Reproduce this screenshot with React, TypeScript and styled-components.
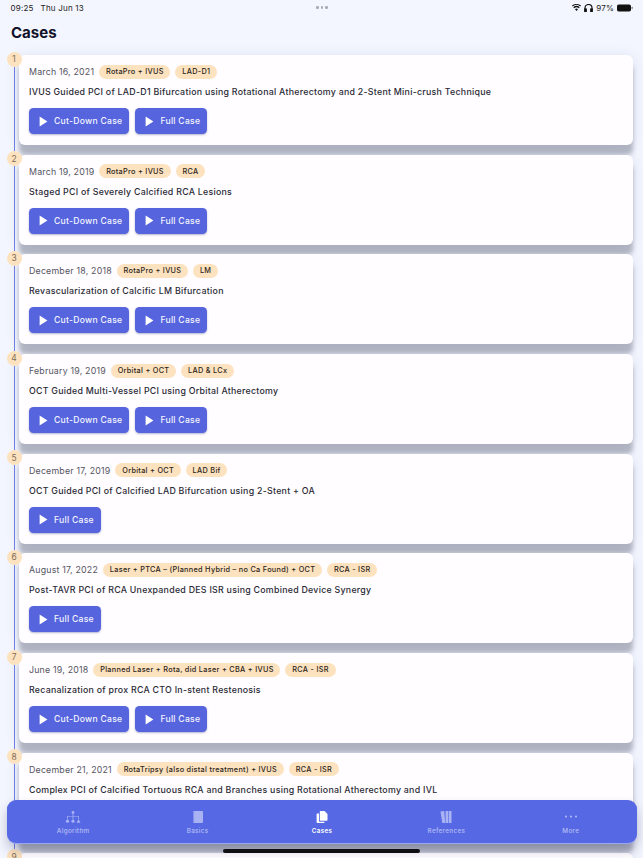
import React from "react";
import styled, { createGlobalStyle } from "styled-components";

const Global = createGlobalStyle`
  html, body { margin: 0; padding: 0; height: 858px; overflow: hidden; background: #f3f6fe; }
  * { box-sizing: border-box; }
`;

const Page = styled.div`
  position: relative;
  width: 643px;
  height: 858px;
  overflow: hidden;
  background: #f3f6fe;
  font-family: Inter, "Noto Sans", sans-serif;
  color: #16162a;
`;
const StatusBar = styled.div`
  height: 15px;
  padding: 0 10px 0 10.5px;
  display: grid;
  grid-template-columns: 1fr auto 1fr;
  align-items: center;
  font-size: 8px;
  letter-spacing: 0.2px;
  color: #222;
`;
const StatusLeft = styled.div`
  display: flex;
  gap: 7px;
`;
const StatusRight = styled.div`
  display: flex;
  justify-content: flex-end;
  align-items: center;
  gap: 3px;
`;
const Dots = styled.div`
  display: flex;
  gap: 2px;
`;
const Dot = styled.span`
  width: 2.5px;
  height: 2.5px;
  border-radius: 50%;
  background: #a9abb2;
`;
const Title = styled.h1`
  margin: 0;
  padding: 8px 11px 0;
  height: 40px;
  font-size: 15px;
  line-height: 20px;
  font-weight: 700;
  color: #12122a;
`;
const List = styled.div`
  position: relative;
  padding: 0 10px 0 19px;
  display: flex;
  flex-direction: column;
  gap: 9.7px;
`;
const Rail = styled.div`
  position: absolute;
  left: 14px;
  top: 0;
  bottom: 0;
  width: 1px;
  background: #6f80e6;
`;
const Marker = styled.div`
  position: absolute;
  left: -12.5px;
  top: -3.5px;
  width: 15px;
  height: 15px;
  border-radius: 50%;
  background: #fde2bf;
  color: #7d6c58;
  font-size: 8.4px;
  display: flex;
  align-items: center;
  justify-content: center;
`;
const Card = styled.div`
  position: relative;
  height: 90px;
  flex: none;
  background: #fffdff;
  border-radius: 6px;
  padding: 8.5px 10px 0;
  box-shadow: 0 10px 4px 0 rgba(50, 52, 70, 0.3), 0 2px 14px rgba(90, 100, 170, 0.16);
`;
const Meta = styled.div`
  display: flex;
  align-items: center;
  gap: 5px;
  height: 16px;
`;
const CaseDate = styled.span`
  font-size: 8.8px;
  letter-spacing: 0.2px;
  color: #55555f;
`;
const Tag = styled.span`
  height: 14px;
  padding: 0 6.8px;
  border-radius: 7px;
  background: #fde2bf;
  color: #2b2620;
  font-size: 7.3px;
  font-weight: 500;
  letter-spacing: 0.3px;
  display: flex;
  align-items: center;
  white-space: nowrap;
`;
const CaseTitle = styled.div`
  margin-top: 6.5px;
  height: 12px;
  font-size: 8.8px;
  line-height: 12px;
  font-weight: 500;
  letter-spacing: 0.27px;
  color: #2a2a35;
  white-space: nowrap;
`;
const Buttons = styled.div`
  margin-top: 10px;
  display: flex;
  gap: 6px;
`;
const Btn = styled.div`
  height: 26px;
  padding: 0 7px 0 8px;
  display: flex;
  align-items: center;
  gap: 4px;
  border-radius: 4.5px;
  background: #5664dd;
  color: #f4f5ff;
  font-size: 8.6px;
  font-weight: 500;
  letter-spacing: 0.27px;
  box-shadow: 0 1px 2px rgba(40, 50, 120, 0.35);
`;
const Nav = styled.div`
  position: absolute;
  left: 7px;
  top: 800px;
  width: 630px;
  height: 42.5px;
  background: #5668e3;
  border-radius: 9px;
  display: grid;
  grid-template-columns: repeat(5, 1fr);
  padding: 0 4px;
  box-shadow: 0 1px 0 #9aa6f3, 0 7px 12px rgba(50, 52, 90, 0.28);
`;
const NavItem = styled.div<{ $active?: boolean }>`
  display: flex;
  flex-direction: column;
  align-items: center;
  padding-top: 9px;
  color: ${(p) => (p.$active ? "#fff" : "#a9b3f4")};
  font-size: 6.3px;
  font-weight: 600;
  letter-spacing: 0.3px;
  svg { display: block; height: 16px; width: 16px; }
`;
const NavLabel = styled.span`
  margin-top: 2px;
  line-height: 9px;
`;
const HomeBar = styled.div`
  position: absolute;
  left: 223px;
  top: 849px;
  width: 197px;
  height: 4px;
  border-radius: 2px;
  background: #101014;
`;

type Case = { date: string; tags: string[]; title: string; cut: boolean };
const cases: Case[] = [
  { date: "March 16, 2021", tags: ["RotaPro + IVUS", "LAD-D1"], title: "IVUS Guided PCI of LAD-D1 Bifurcation using Rotational Atherectomy and 2-Stent Mini-crush Technique", cut: true },
  { date: "March 19, 2019", tags: ["RotaPro + IVUS", "RCA"], title: "Staged PCI of Severely Calcified RCA Lesions", cut: true },
  { date: "December 18, 2018", tags: ["RotaPro + IVUS", "LM"], title: "Revascularization of Calcific LM Bifurcation", cut: true },
  { date: "February 19, 2019", tags: ["Orbital + OCT", "LAD & LCx"], title: "OCT Guided Multi-Vessel PCI using Orbital Atherectomy", cut: true },
  { date: "December 17, 2019", tags: ["Orbital + OCT", "LAD Bif"], title: "OCT Guided PCI of Calcified LAD Bifurcation using 2-Stent + OA", cut: false },
  { date: "August 17, 2022", tags: ["Laser + PTCA – (Planned Hybrid – no Ca Found) + OCT", "RCA - ISR"], title: "Post-TAVR PCI of RCA Unexpanded DES ISR using Combined Device Synergy", cut: false },
  { date: "June 19, 2018", tags: ["Planned Laser + Rota, did Laser + CBA + IVUS", "RCA - ISR"], title: "Recanalization of prox RCA CTO In-stent Restenosis", cut: true },
  { date: "December 21, 2021", tags: ["RotaTripsy (also distal treatment) + IVUS", "RCA - ISR"], title: "Complex PCI of Calcified Tortuous RCA and Branches using Rotational Atherectomy and IVL", cut: true },
  { date: "", tags: [], title: "", cut: false },
];

const PlayIcon = () => (
  <svg width="13" height="13" viewBox="0 0 13 13" fill="#fff">
    <path d="M2.6 1.6 L10.4 6.5 L2.6 11.4 Z" />
  </svg>
);

const Action = ({ label }: { label: string }) => (
  <Btn>
    <PlayIcon />
    <span>{label}</span>
  </Btn>
);

const AlgorithmIcon = () => (
  <svg viewBox="0 0 16 16" fill="currentColor">
    <circle cx="8" cy="3.4" r="1.4" />
    <path d="M7.6 4h.8v2.9h5.5v3.4h-.7V7.6H8.4v2.7h-.8V7.6H2.8v2.7h-.7V6.9h5.5z" />
    <circle cx="2.5" cy="12.2" r="1.6" />
    <circle cx="8" cy="12.2" r="1.6" />
    <path d="M13.5 10.2l2 3.6h-4z" />
  </svg>
);
const BasicsIcon = () => (
  <svg viewBox="0 0 16 16" fill="currentColor">
    <rect x="3" y="2" width="10" height="12" rx="1" />
    <rect x="3" y="2" width="1.2" height="12" rx="0.6" fill="#8793ea" />
  </svg>
);
const CasesIcon = () => (
  <svg viewBox="0 0 16 16" fill="currentColor">
    <path d="M6.6 2h3.9l3 3v6a.8.8 0 0 1-.8.8H6.6a.8.8 0 0 1-.8-.8V2.8a.8.8 0 0 1 .8-.8z" />
    <path d="M3.4 4.5H5v7.3a.9.9 0 0 0 .9.9h4.6v.5a.8.8 0 0 1-.8.8H3.4a.8.8 0 0 1-.8-.8V5.3a.8.8 0 0 1 .8-.8z" />
  </svg>
);
const ReferencesIcon = () => (
  <svg viewBox="0 0 16 16" fill="currentColor">
    <path d="M2.5 2.6L6.2 2l1 12H4.3z" />
    <rect x="7.6" y="2" width="2.6" height="12" />
    <rect x="10.8" y="2" width="2.7" height="12" />
  </svg>
);
const MoreIcon = () => (
  <svg viewBox="0 0 16 16" fill="currentColor">
    <circle cx="3" cy="7.6" r="1.1" />
    <circle cx="8" cy="7.6" r="1.1" />
    <circle cx="13" cy="7.6" r="1.1" />
  </svg>
);

const App = () => (
  <Page>
    <Global />
    <StatusBar>
      <StatusLeft>
        <span>09:25</span>
        <span>Thu Jun 13</span>
      </StatusLeft>
      <Dots>
        <Dot />
        <Dot />
        <Dot />
      </Dots>
      <StatusRight>
        <svg width="9" height="7" viewBox="0 0 18 14" fill="#111">
          <path d="M9 14l-3-3.6a4.6 4.6 0 0 1 6 0zM4.4 8.6L2.6 6.4a10 10 0 0 1 12.8 0l-1.8 2.2a7.2 7.2 0 0 0-9.2 0zM1.4 4.9L0 3.2a14 14 0 0 1 18 0l-1.4 1.7a11.8 11.8 0 0 0-15.2 0z" />
        </svg>
        <svg width="9" height="8" viewBox="0 0 18 16" fill="none" stroke="#111" strokeWidth="2.4">
          <path d="M2 13V8a7 7 0 0 1 14 0v5" />
          <rect x="1.5" y="10" width="3" height="5" fill="#111" />
          <rect x="13.5" y="10" width="3" height="5" fill="#111" />
        </svg>
        <span>97%</span>
        <svg width="16" height="8" viewBox="0 0 16 8">
          <rect x="0" y="0.5" width="14" height="7" rx="1.8" fill="#111" />
          <rect x="14.6" y="2.8" width="1" height="2.4" rx="0.5" fill="#777" />
        </svg>
      </StatusRight>
    </StatusBar>
    <Title>Cases</Title>
    <List>
      <Rail />
      {cases.map((c, i) => (
        <Card key={i}>
          <Marker>{i + 1}</Marker>
          <Meta>
            <CaseDate>{c.date}</CaseDate>
            {c.tags.map((t) => (
              <Tag key={t}>{t}</Tag>
            ))}
          </Meta>
          <CaseTitle>{c.title}</CaseTitle>
          {c.date && (
            <Buttons>
              {c.cut && <Action label="Cut-Down Case" />}
              <Action label="Full Case" />
            </Buttons>
          )}
        </Card>
      ))}
    </List>
    <Nav>
      <NavItem>
        <AlgorithmIcon />
        <NavLabel>Algorithm</NavLabel>
      </NavItem>
      <NavItem>
        <BasicsIcon />
        <NavLabel>Basics</NavLabel>
      </NavItem>
      <NavItem $active>
        <CasesIcon />
        <NavLabel>Cases</NavLabel>
      </NavItem>
      <NavItem>
        <ReferencesIcon />
        <NavLabel>References</NavLabel>
      </NavItem>
      <NavItem>
        <MoreIcon />
        <NavLabel>More</NavLabel>
      </NavItem>
    </Nav>
    <HomeBar />
  </Page>
);

export default App;
